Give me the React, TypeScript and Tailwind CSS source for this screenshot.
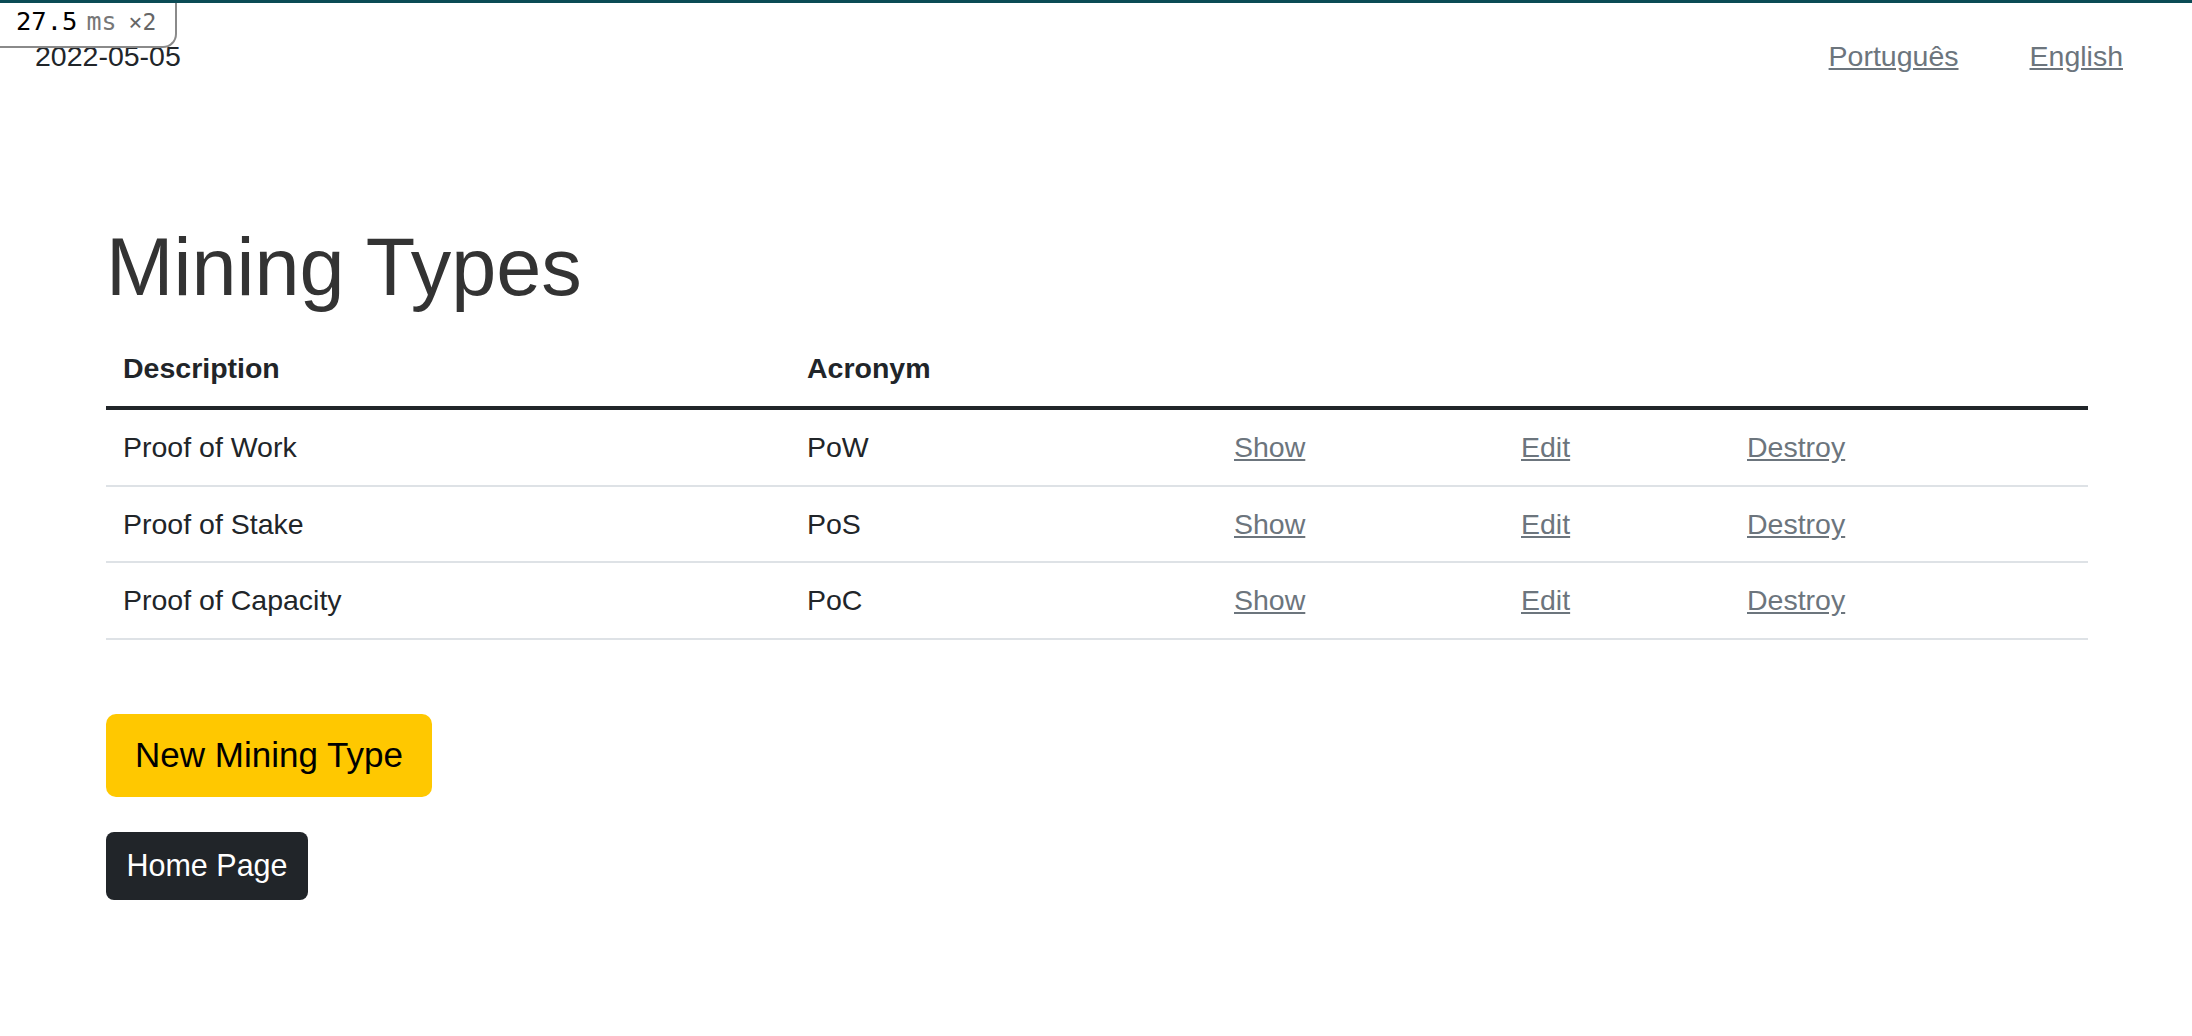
import React from "react";

const rows = [
  { d: "Proof of Work", a: "PoW" },
  { d: "Proof of Stake", a: "PoS" },
  { d: "Proof of Capacity", a: "PoC" },
];

const cols = "grid grid-cols-[684px_427px_287px_226px_358px]";

export default function App() {
  return (
    <div
      className="relative min-h-[1036px] w-full bg-white text-[#212529]"
      style={{ fontFamily: '"Liberation Sans", Arial, sans-serif' }}
    >
      {/* dev overlay */}
      <div className="absolute left-0 top-0 z-20 h-[3px] w-full bg-[#0b4b55]" />
      <div
        className="absolute left-0 top-0 z-10 flex h-[48px] w-[177px] items-baseline rounded-br-[14px] border-b-2 border-r-2 border-[#8a8a8a] bg-white pl-[16px] pt-[6px]"
        style={{ fontFamily: '"DejaVu Sans Mono", monospace' }}
      >
        <span className="text-[25.5px] leading-[30px] text-black">27.5</span>
        <span className="ml-[9px] text-[25px] leading-[30px] text-[#777]">ms</span>
        <span className="ml-[12px] text-[23px] leading-[30px] text-[#666]">×2</span>
      </div>

      <header className="flex items-start justify-between pl-[35px] pr-[69px] pt-[35px] text-[28.5px] leading-[42px]">
        <div>2022-05-05</div>
        <nav className="flex gap-[71px]">
          <a href="#" className="text-[#6c757d] underline">Português</a>
          <a href="#" className="text-[#6c757d] underline">English</a>
        </nav>
      </header>

      <main className="mx-[106px] pt-[142px]">
        <h1 className="mb-[16px] text-[81px] font-normal leading-[96px] text-[#333]">Mining Types</h1>

        <div className="w-[1982px] text-[28.5px] leading-[42px]">
          <div className={`${cols} h-[79px] items-center border-b-4 border-[#212529] pb-[1px] font-bold`}>
            <div className="px-[17px]">Description</div>
            <div className="px-[17px]">Acronym</div>
            <div />
            <div />
            <div />
          </div>
          {rows.map((r) => (
            <div key={r.a} className={`${cols} h-[76.5px] items-center border-b-2 border-[#dee2e6]`}>
              <div className="px-[17px]">{r.d}</div>
              <div className="px-[17px]">{r.a}</div>
              <div className="px-[17px]">
                <a href="#" className="text-[#6c757d] underline">Show</a>
              </div>
              <div className="px-[17px]">
                <a href="#" className="text-[#6c757d] underline">Edit</a>
              </div>
              <div className="px-[17px]">
                <a href="#" className="text-[#6c757d] underline">Destroy</a>
              </div>
            </div>
          ))}
        </div>

        <div className="mt-[74px] flex flex-col items-start gap-[35px]">
          <button className="flex h-[83px] w-[326px] items-center justify-center rounded-[10px] bg-[#ffc800] text-[35px] text-black">
            New Mining Type
          </button>
          <button className="flex h-[68px] w-[202px] items-center justify-center rounded-[8px] bg-[#212529] text-[30.5px] text-white">
            Home Page
          </button>
        </div>
      </main>
    </div>
  );
}
